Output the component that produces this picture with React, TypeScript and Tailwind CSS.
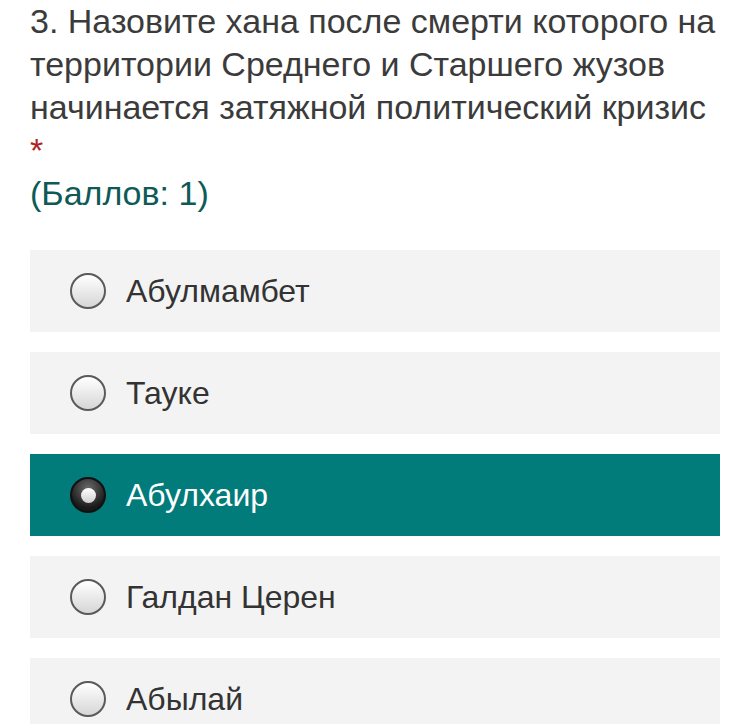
const options = ["Абулмамбет", "Тауке", "Абулхаир", "Галдан Церен", "Абылай"];
const selected = 2;

function Radio({ checked }: { checked: boolean }) {
  if (checked) {
    return (
      <span className="flex h-[36px] w-[36px] shrink-0 items-center justify-center rounded-full border-2 border-[#111] bg-[radial-gradient(circle_at_50%_30%,#6b6b6b,#1a1a1a_70%)]">
        <span className="h-[15px] w-[15px] rounded-full bg-[linear-gradient(#ffffff,#cfcfcf)]" />
      </span>
    );
  }
  return (
    <span className="h-[36px] w-[36px] shrink-0 rounded-full border-2 border-[#5a5a5a] bg-[linear-gradient(#ffffff,#d6d6d6)]" />
  );
}

export default function App() {
  return (
    <div className="min-h-[724px] bg-white px-[30px] font-['Liberation_Sans',Arial,sans-serif]">
      <div className="text-[34px] leading-[43px] text-[#3b3b3b]">
        <p>3. Назовите хана после смерти которого на территории Среднего и Старшего жузов начинается затяжной политический кризис</p>
        <p className="text-[#b22222]">*</p>
        <p className="text-[#0d5a57]">(Баллов: 1)</p>
      </div>

      <div className="mt-[35px] flex flex-col gap-5">
        {options.map((opt, i) => (
          <label
            key={opt}
            className={
              i === selected
                ? "flex h-[82px] items-center gap-5 bg-[#027b7b] pl-10 text-[32px] text-white"
                : "flex h-[82px] items-center gap-5 bg-[#f3f3f3] pl-10 text-[32px] text-[#333]"
            }
          >
            <Radio checked={i === selected} />
            <span>{opt}</span>
          </label>
        ))}
      </div>
    </div>
  );
}
